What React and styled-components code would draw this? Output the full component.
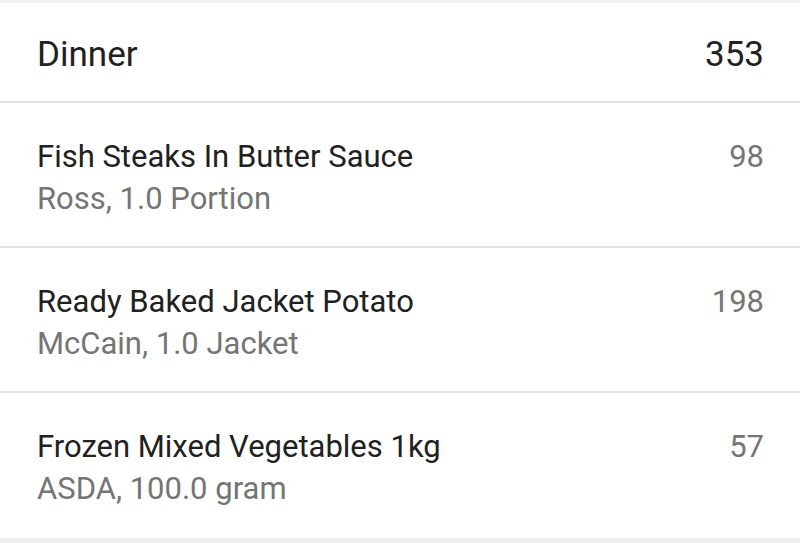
import React from 'react'
import styled, { createGlobalStyle } from 'styled-components'

const Global = createGlobalStyle`
    html, body { margin: 0; padding: 0; background: #fff; }
    body { font-family: Roboto, "Noto Sans", sans-serif; -webkit-font-smoothing: antialiased; }
`

const Screen = styled.div`
    width: 800px;
    height: 543px;
    overflow: hidden;
    background: #efefef;
    padding-top: 3px;
    box-sizing: border-box;
`
const Card = styled.section`
    background: #fff;
    display: flex;
    flex-direction: column;
`
const Header = styled.div`
    display: flex;
    align-items: center;
    justify-content: space-between;
    padding: 4px 36px 0 37px;
    height: 94px;
    border-bottom: 2px solid #e3e3e3;
    font-size: 35px;
    color: #212121;
`
const Item = styled.div`
    height: 145px;
    display: flex;
    justify-content: space-between;
    align-items: flex-start;
    padding: 36px 36px 0 37px;
    border-bottom: ${p => (p.last ? 'none' : '2px solid #e3e3e3')};
    box-sizing: border-box;
`
const Texts = styled.div`
    display: flex;
    flex-direction: column;
    gap: 6px;
`
const Title = styled.div`
    font-size: 31px;
    line-height: 36px;
    color: #212121;
`
const Sub = styled.div`
    font-size: 31px;
    line-height: 36px;
    color: #757575;
`
const Kcal = styled.div`
    font-size: 31px;
    line-height: 36px;
    color: #757575;
`

const foods = [
    { name: 'Fish Steaks In Butter Sauce', info: 'Ross, 1.0 Portion', kcal: 98 },
    { name: 'Ready Baked Jacket Potato', info: 'McCain, 1.0 Jacket', kcal: 198 },
    { name: 'Frozen Mixed Vegetables 1kg', info: 'ASDA, 100.0 gram', kcal: 57 },
]

export default function App() {
    return (
        <Screen>
            <Global />
            <Card>
                <Header>
                    <span>Dinner</span>
                    <span>353</span>
                </Header>
                {foods.map((f, i) => (
                    <Item key={f.name} last={i === foods.length - 1}>
                        <Texts>
                            <Title>{f.name}</Title>
                            <Sub>{f.info}</Sub>
                        </Texts>
                        <Kcal>{f.kcal}</Kcal>
                    </Item>
                ))}
            </Card>
        </Screen>
    )
}
